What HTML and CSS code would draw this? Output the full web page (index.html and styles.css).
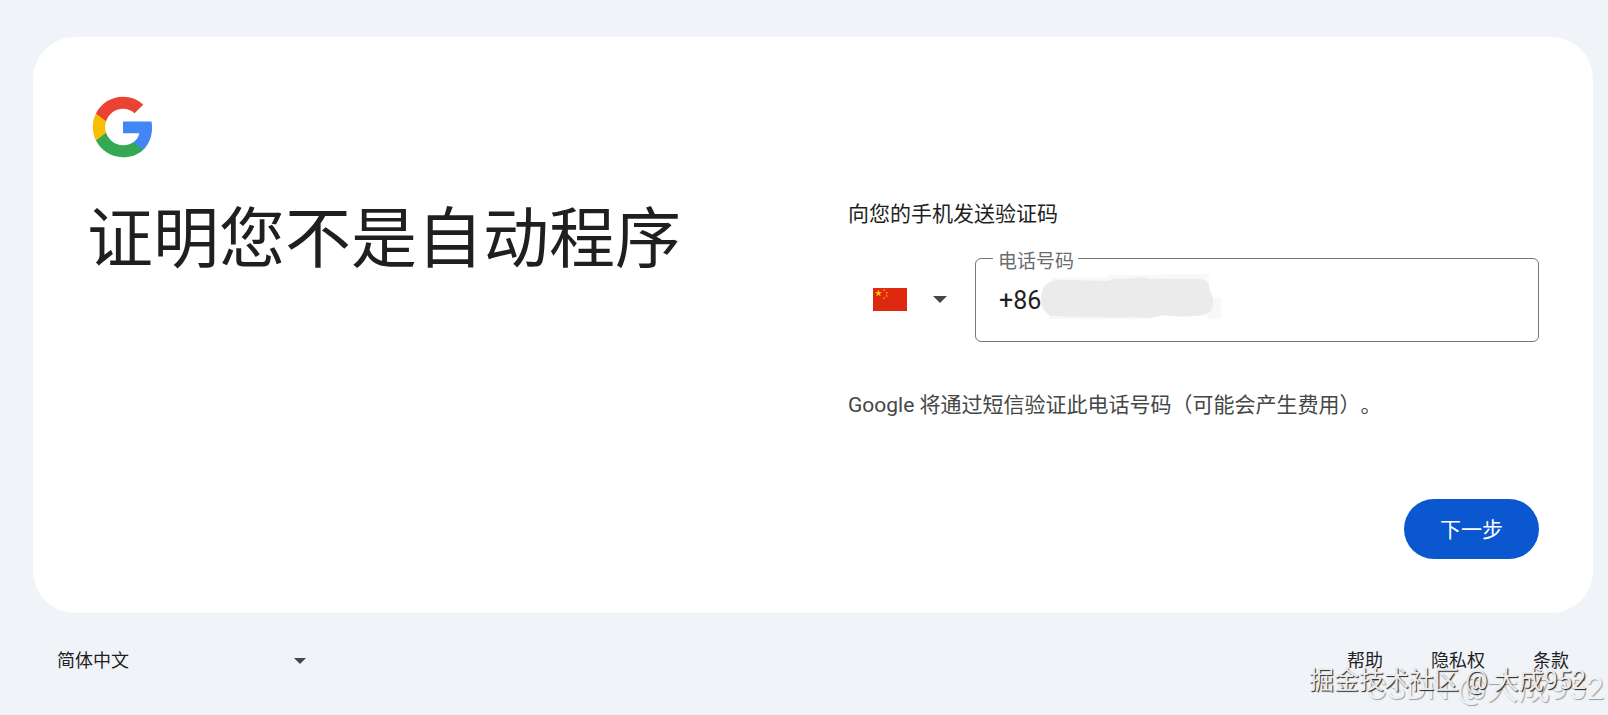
FILE: index.html
```html
<!DOCTYPE html>
<html lang="zh-CN">
<head>
<meta charset="utf-8">
<meta name="viewport" content="width=device-width, initial-scale=1">
<title>证明您不是自动程序</title>
<link rel="stylesheet" href="styles.css">
</head>
<body>
<div class="page">
  <main class="card">
    <svg class="logo" viewBox="0 0 48 48" role="img" aria-label="Google">
      <path fill="#4285F4" d="M45.12 24.5c0-1.56-.14-3.06-.4-4.5H24v8.51h11.84c-.51 2.75-2.06 5.08-4.39 6.64v5.52h7.11c4.16-3.83 6.56-9.47 6.56-16.17z"/>
      <path fill="#34A853" d="M24 46c5.94 0 10.92-1.97 14.56-5.33l-7.11-5.52c-1.97 1.32-4.49 2.1-7.45 2.1-5.73 0-10.58-3.87-12.31-9.07H4.34v5.7C7.96 41.07 15.4 46 24 46z"/>
      <path fill="#FBBC05" d="M11.69 28.18C11.25 26.86 11 25.45 11 24s.25-2.86.69-4.18v-5.7H4.34C2.85 17.09 2 20.45 2 24s.85 6.91 2.34 9.88l7.35-5.7z"/>
      <path fill="#EA4335" d="M24 10.75c3.23 0 6.13 1.11 8.41 3.29l6.31-6.31C34.91 4.18 29.93 2 24 2 15.4 2 7.96 6.93 4.34 14.12l7.35 5.7c1.73-5.2 6.58-9.07 12.31-9.07z"/>
    </svg>
    <div class="columns">
      <h1 class="title">证明您不是自动程序</h1>
      <form class="form">
        <p class="prompt">向您的手机发送验证码</p>
        <div class="phone-row">
          <button class="country" type="button" aria-label="中国 (+86)">
            <svg class="flag" viewBox="0 0 34 23" aria-hidden="true">
              <rect width="34" height="23" fill="#de2910"/>
              <path fill="#ffc800" d="M5.5 1.6l.9 2.500h2.600L6.900 5.700l.8 2.500-2.200-1.500-2.200 1.500.8-2.500L2 4.100h2.600z"/>
              <path fill="#ffa000" d="M11 .8l.4.900h1l-.8.600.3 1-.9-.6-.9.600.3-1-.8-.6h1zM13.800 3.500l.4.900h1l-.8.600.3 1-.9-.6-.9.600.3-1-.8-.6h1zM13.800 6.600l.4.900h1l-.8.600.3 1-.9-.6-.9.600.3-1-.8-.6h1zM11 8.800l.4.900h1l-.8.600.3 1-.9-.6-.9.600.3-1-.8-.6h1z"/>
            </svg>
            <svg class="arrow" viewBox="0 0 14 7" aria-hidden="true"><path fill="#444746" d="M0 0h14L7 7z"/></svg>
          </button>
          <div class="field">
            <label class="field-label" for="phone">电话号码</label>
            <input class="field-input" id="phone" type="tel" value="+86">
            <svg class="smudge" viewBox="0 0 180 46" aria-hidden="true">
              <path fill="#f8f8f8" d="M10 4l58-1 2-2h52l2-1h44v23h12v22h-14v-3h-54l-8 3H8z"/>
              <path fill="#ebebeb" d="M9 8q5-3 20-2l38 1q6-3 16-2 18-3 26 0h52q7 2 8 12 5 8 2 17-3 6-11 7-20 3-38 0-12 5-24 2-44 1-88-1Q0 37 0 25 0 12 9 8z"/>
            </svg>
          </div>
        </div>
        <p class="note">Google 将通过短信验证此电话号码（可能会产生费用）。</p>
        <div class="actions"><button class="next" type="submit">下一步</button></div>
      </form>
    </div>
  </main>
  <footer class="footer">
    <div class="language">
      <select class="language-select" aria-label="语言"><option>简体中文</option></select>
      <svg class="language-arrow" viewBox="0 0 12 6" aria-hidden="true"><path fill="#444746" d="M0 0h12L6 6z"/></svg>
    </div>
    <nav class="links">
      <a class="link" href="#">帮助</a>
      <a class="link" href="#">隐私权</a>
      <a class="link" href="#">条款</a>
    </nav>
  </footer>
  <div class="mark mark-back">CSDN @大成952</div>
  <div class="mark mark-front">掘金技术社区 @ 大成952</div>
</div>
</body>
</html>
```

FILE: styles.css
```css
* {
  box-sizing: border-box;
}

body {
  margin: 0;
  background: #f0f4f9;
  color: #1f1f1f;
  font-family: Roboto, "Noto Sans CJK SC", sans-serif;
  text-spacing-trim: space-all;
}

button,
input,
select {
  font: inherit;
  color: inherit;
}

.page {
  position: relative;
  min-height: 100vh;
  padding: 37px 15px 0 33px;
  overflow: hidden;
}

.card {
  padding: 54px;
  border-radius: 42px;
  background: #fff;
}

.logo {
  display: block;
  width: 66px;
  height: 66px;
  margin: 3px 0 0 3px;
}

.columns {
  display: grid;
  grid-template-columns: 1fr 1fr;
  column-gap: 70px;
  margin-top: 39px;
}

.title {
  margin: 0;
  font-size: 66px;
  font-weight: 400;
  line-height: 82px;
}

.form {
  display: flex;
  flex-direction: column;
}

.prompt {
  margin: 0;
  font-size: 21px;
  line-height: 30px;
}

.phone-row {
  display: flex;
  margin-top: 29px;
}

.country {
  display: flex;
  align-items: center;
  gap: 26px;
  width: 127px;
  height: 82px;
  padding: 0 0 0 25px;
  border: 0;
  background: none;
}

.flag {
  width: 34px;
  height: 23px;
}

.arrow {
  width: 14px;
  height: 7px;
}

.field {
  position: relative;
  flex: 1;
}

.field-input {
  display: block;
  width: 100%;
  height: 84px;
  padding: 0 23px;
  border: 1px solid #747775;
  border-radius: 6px;
  background: #fff;
  font-size: 25px;
}

.field-label {
  position: absolute;
  top: -10px;
  left: 18px;
  padding: 0 4px 0 5px;
  background: #fff;
  color: #6a6d6c;
  font-size: 19px;
  line-height: 28px;
}

.smudge {
  position: absolute;
  top: 16px;
  left: 66px;
  width: 180px;
  height: 46px;
}

.note {
  margin: 48px 0 0;
  color: #444746;
  font-size: 21px;
  line-height: 30px;
}

.actions {
  display: flex;
  justify-content: flex-end;
  margin-top: 79px;
}

.next {
  height: 60px;
  padding: 0 36px 2px;
  border: 0;
  border-radius: 30px;
  background: #0b57d0;
  color: #fff;
  font-size: 21px;
}

.footer {
  display: flex;
  justify-content: space-between;
  padding: 33px 24px 0;
  font-size: 18px;
  line-height: 30px;
}

.language {
  position: relative;
  width: 250px;
}

.language-select {
  width: 100%;
  height: 30px;
  padding: 0;
  border: 0;
  background: none;
  appearance: none;
}

.language-arrow {
  position: absolute;
  top: 12px;
  right: 1px;
  width: 12px;
  height: 6px;
  pointer-events: none;
}

.links {
  display: flex;
  gap: 48px;
}

.link {
  color: inherit;
  text-decoration: none;
}

.mark {
  position: absolute;
  white-space: nowrap;
  pointer-events: none;
}

.mark-back {
  right: 4px;
  bottom: 7px;
  color: #eef1f5;
  font-size: 32px;
  line-height: 40px;
  text-shadow: 1px 1px 1px #9a9da2;
}

.mark-front {
  right: 22px;
  bottom: 16px;
  color: #e9ecf0;
  font-size: 25px;
  line-height: 36px;
  text-shadow: 1px 1px 1px #1f1f1f;
}
```
